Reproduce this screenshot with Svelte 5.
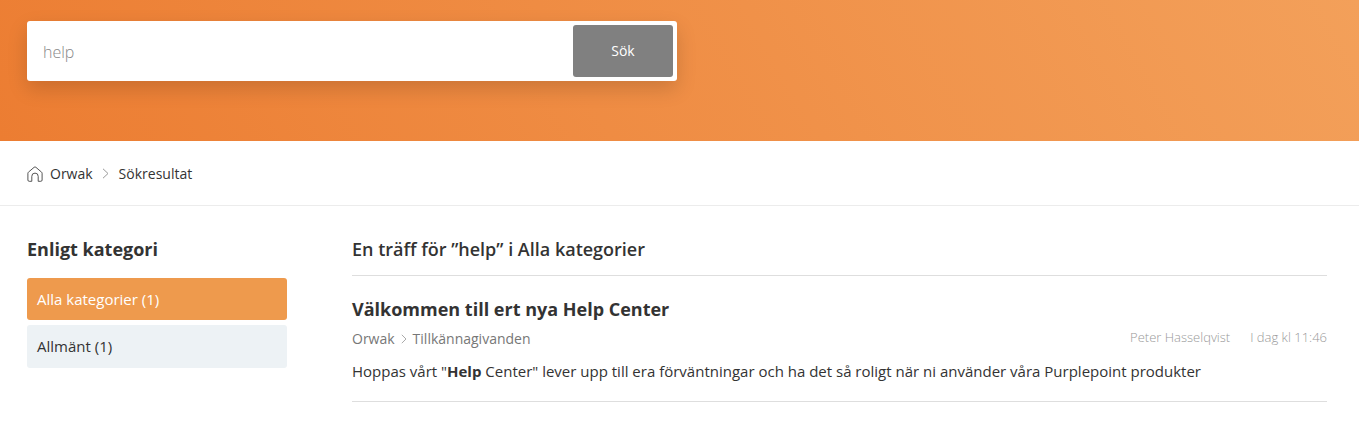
<script>
  const categories = [
    { label: 'Alla kategorier (1)', active: true },
    { label: 'Allmänt (1)', active: false }
  ]
</script>

<div class="page">
  <header class="hero">
    <form class="search" on:submit|preventDefault>
      <input class="search-input" type="text" value="help" aria-label="Sök" />
      <button class="search-button" type="submit">Sök</button>
    </form>
  </header>

  <nav class="crumbs">
    <svg class="home" width="16" height="16" viewBox="0 0 16 16" fill="none" stroke="#555" stroke-width="1">
      <path d="M.9 14V7.2a1.4 1.4 0 0 1 .5-1L7.1 1.3a1.4 1.4 0 0 1 1.800 0l5.700 4.900a1.400 1.400 0 0 1 .5 1V14a1.300 1.300 0 0 1-1.300 1.300h-2.600V10.300a3.200 3.200 0 0 0-6.400 0v5H2.200A1.300 1.300 0 0 1 .9 14z" stroke-linejoin="round" />
    </svg>
    <span>Orwak</span>
    <svg class="chev" width="7" height="11" viewBox="0 0 7 11" fill="none" stroke="#999" stroke-width="1">
      <path d="M1 .8l5 4.700-5 4.700" />
    </svg>
    <span>Sökresultat</span>
  </nav>

  <main class="main">
    <aside class="sidebar">
      <h2 class="side-title">Enligt kategori</h2>
      <ul class="cat-list">
        {#each categories as cat}
          <li class="cat" class:active={cat.active}>{cat.label}</li>
        {/each}
      </ul>
    </aside>

    <section class="results">
      <h1 class="results-title">En träff för ”help” i Alla kategorier</h1>
      <article class="result">
        <h3 class="result-title">Välkommen till ert nya Help Center</h3>
        <div class="meta">
          <div class="path">
            <span>Orwak</span>
            <svg width="6" height="10" viewBox="0 0 6 10" fill="none" stroke="#aaa" stroke-width="1">
              <path d="M.8.8L5 5 .8 9.200" />
            </svg>
            <span>Tillkännagivanden</span>
          </div>
          <div class="byline">
            <span>Peter Hasselqvist</span>
            <span>I dag kl 11:46</span>
          </div>
        </div>
        <p class="excerpt">Hoppas vårt "<strong>Help</strong> Center" lever upp till era förväntningar och ha det så roligt när ni använder våra Purplepoint produkter</p>
      </article>
    </section>
  </main>
</div>

<style>
  :global(body) {
    margin: 0;
    background: #fff;
  }

  .page {
    font-family: "Open Sans", "Liberation Sans", sans-serif;
    color: #333;
    font-size: 14px;
  }

  .hero {
    height: 141px;
    box-sizing: border-box;
    padding: 21px 27px 0;
    background: linear-gradient(60deg, #ec7d32 0%, #f3a05a 100%);
  }

  .search {
    display: flex;
    width: 650px;
    height: 60px;
    box-sizing: border-box;
    padding: 4px;
    background: #fff;
    border-radius: 3px;
    box-shadow: 0 8px 20px rgba(0, 0, 0, 0.15);
  }

  .search-input {
    flex: 1;
    min-width: 0;
    padding: 2px 12px 0;
    border: none;
    outline: none;
    background: transparent;
    font-family: inherit;
    font-size: 16px;
    font-weight: 300;
    color: #888;
  }

  .search-button {
    width: 100px;
    border: none;
    border-radius: 3px;
    background: #808080;
    color: #fff;
    font-family: inherit;
    font-size: 14px;
    font-weight: 400;
    padding: 0 0 2px;
  }

  .crumbs {
    display: flex;
    align-items: center;
    height: 65px;
    box-sizing: border-box;
    padding: 1px 27px 0;
    border-bottom: 1px solid #ececec;
    font-size: 14px;
  }

  .home {
    margin-right: 7px;
  }

  .chev {
    margin: 0 10px 0 9px;
  }

  .main {
    display: flex;
    gap: 65px;
    padding: 0 32px 0 27px;
  }

  .sidebar {
    width: 260px;
    flex-shrink: 0;
  }

  .side-title {
    margin: 30px 0 16px;
    font-size: 18px;
    line-height: 26px;
    font-weight: 700;
  }

  .cat-list {
    list-style: none;
    margin: 0;
    padding: 0;
    display: flex;
    flex-direction: column;
    gap: 5px;
  }

  .cat {
    padding: 0 10px;
    height: 42px;
    line-height: 42px;
    border-radius: 3px;
    background: #edf2f5;
    font-size: 15px;
  }

  .cat:last-child {
    height: 43px;
    line-height: 43px;
  }

  .cat.active {
    background: #ee9a4d;
    color: #fff;
  }

  .results {
    flex: 1;
    min-width: 0;
  }

  .results-title {
    margin: 0;
    padding: 31px 0 13px;
    font-size: 18px;
    line-height: 25px;
    font-weight: 600;
    border-bottom: 1px solid #dedede;
  }

  .result {
    padding: 20px 0 18px;
    border-bottom: 1px solid #dedede;
  }

  .result-title {
    margin: 0;
    font-size: 18px;
    line-height: 26px;
    font-weight: 700;
  }

  .meta {
    display: flex;
    justify-content: space-between;
    align-items: flex-start;
    margin-top: 7px;
    line-height: 20px;
  }

  .path {
    display: flex;
    align-items: center;
    gap: 6px;
    color: #777;
    font-size: 14px;
  }

  .byline {
    display: flex;
    gap: 20px;
    color: #999;
    font-size: 13px;
    line-height: 16px;
    font-weight: 300;
  }

  .excerpt {
    margin: 10px 0 0;
    font-size: 15px;
    line-height: 24px;
  }

  .excerpt strong {
    font-weight: 700;
  }
</style>
